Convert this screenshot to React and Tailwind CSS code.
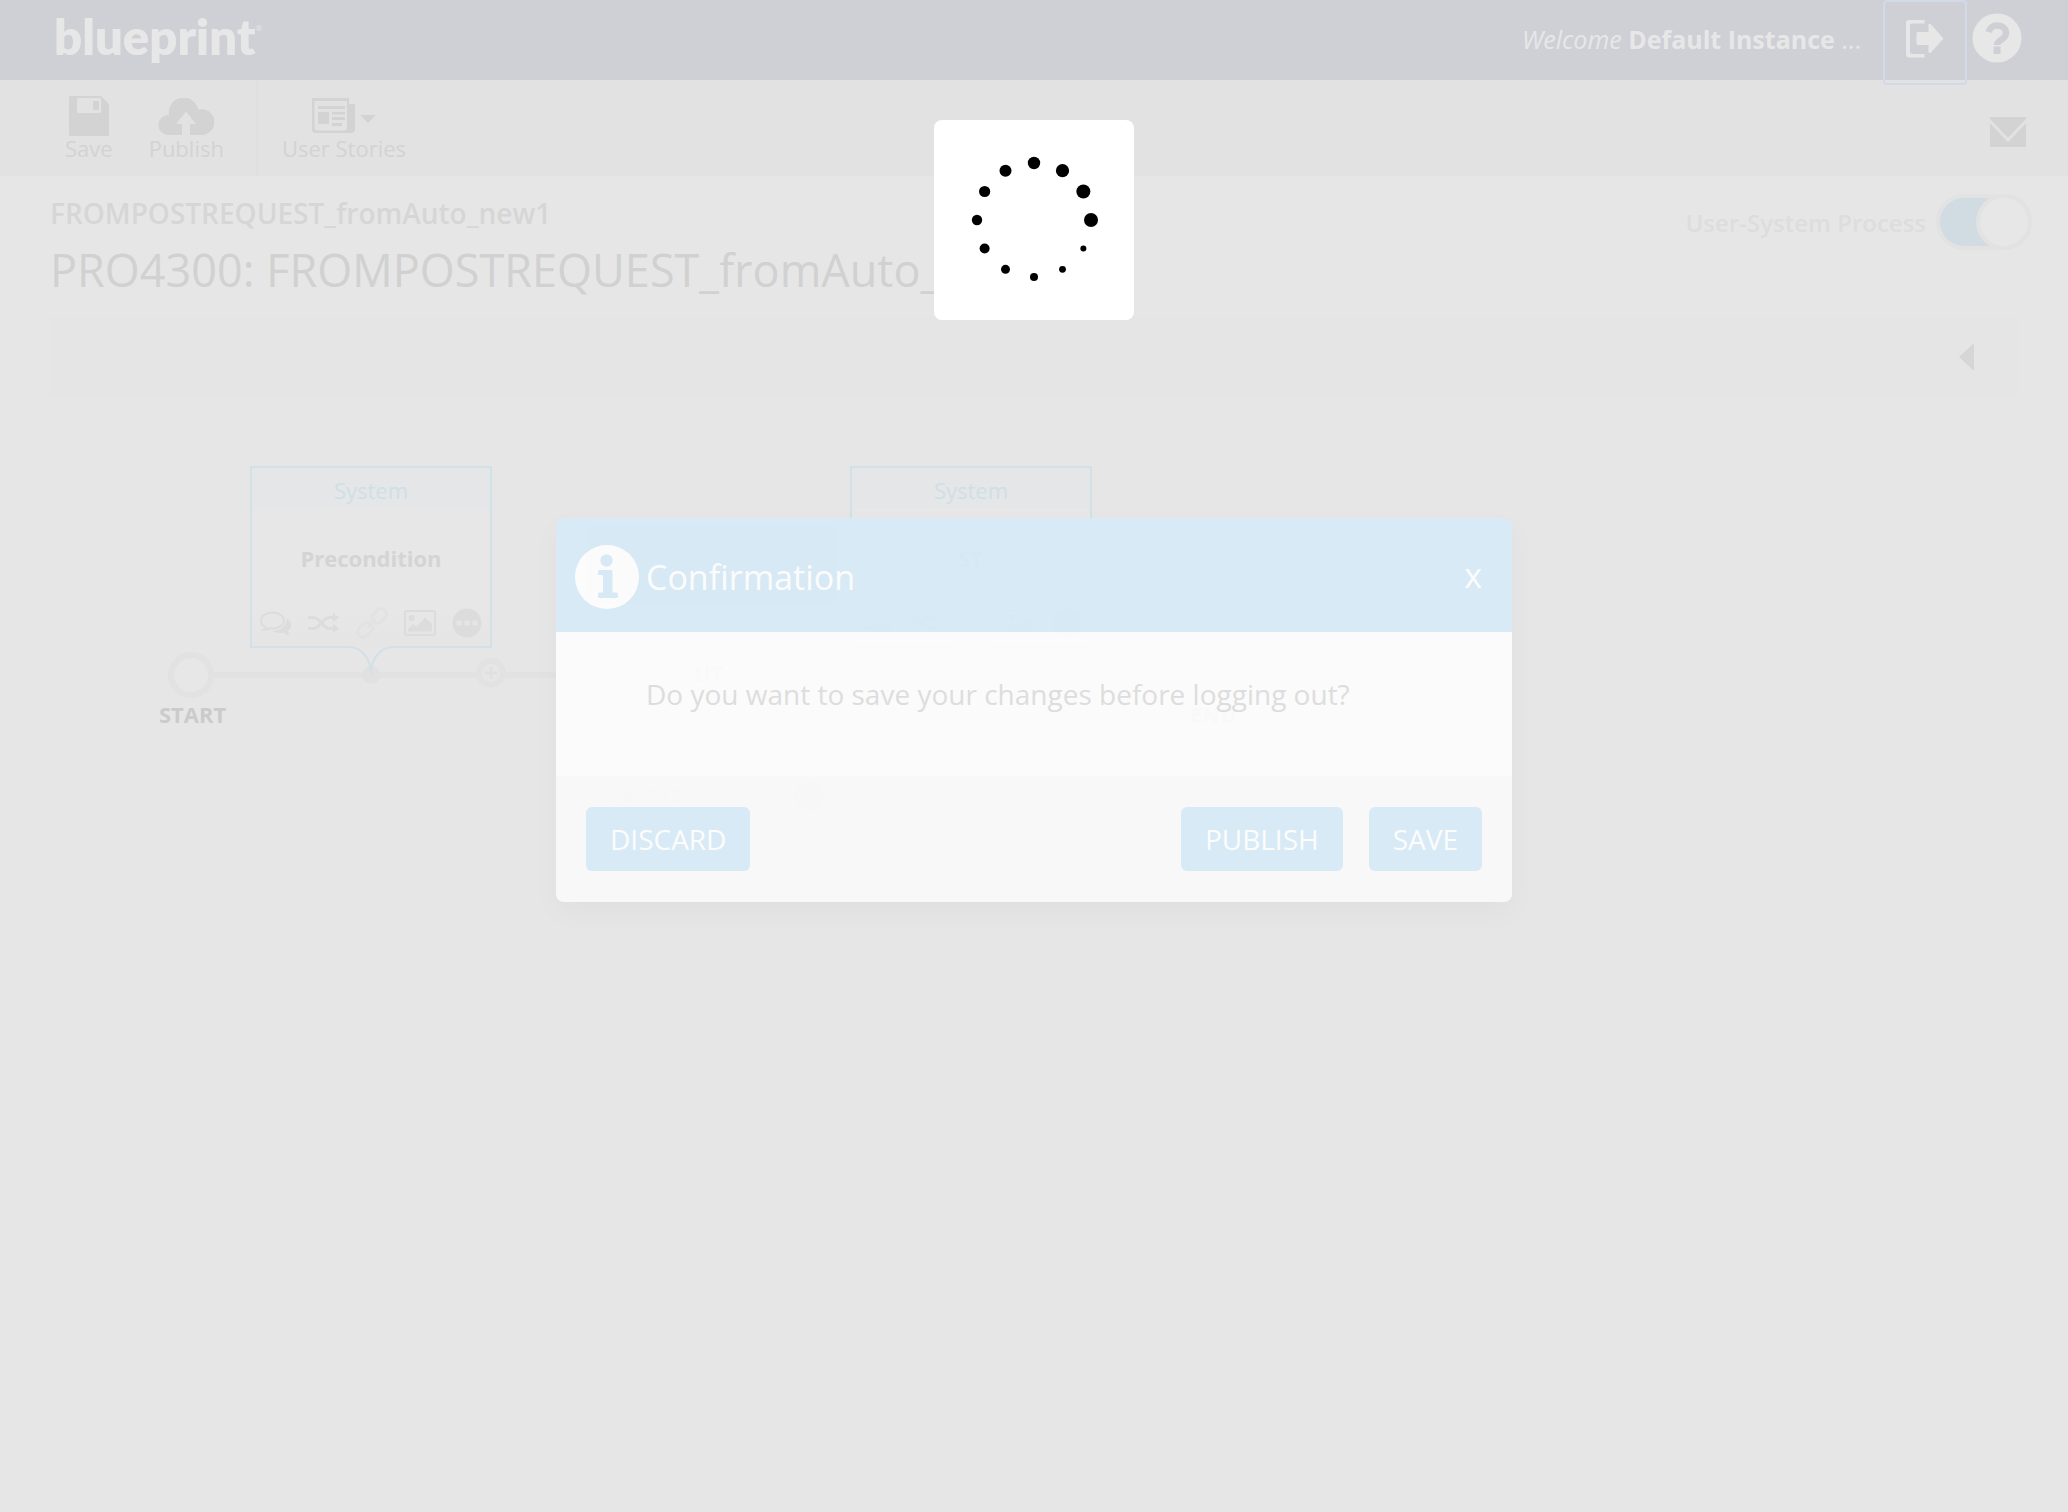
import React from "react";

const SaveIcon = () => (
  <svg width="40" height="40" viewBox="0 0 40 40" fill="#d3d3d3" fillRule="evenodd">
    <path d="M1 0H32L40 8V39Q40 40 39 40H1Q0 40 0 39V1Q0 0 1 0ZM8 2.500V16Q8 17 9 17H31Q32 17 32 16V2.500Q32 2 31 2H9Q8 2 8 2.500ZM24 5H30V14H24Z" />
  </svg>
);

const CloudIcon = () => (
  <svg width="56" height="38" viewBox="0 0 56 38">
    <path d="M10 37A10 10 0 0 1 11 17A14.500 14.500 0 0 1 40 11.500A13 13 0 1 1 43 37Z" fill="#d3d3d3" />
    <path d="M28 13.500L38 26H32V38H24V26H18Z" fill="#e2e2e2" />
  </svg>
);

const StoriesIcon = () => (
  <svg width="64" height="38" viewBox="0 0 64 38">
    <path fill="#d3d3d3" fillRule="evenodd" d="M0 0H37V6H43V31Q43 35 39 35H4Q0 35 0 31ZM2.500 3V30Q2.500 32.500 5 32.500H32Q35 32.500 35 30V3Z" />
    <path fill="#d3d3d3" d="M6 8H33V11H6ZM6 14H17V26H6ZM20 14H33V16.500H20ZM20 19H33V22H20ZM20 25H30V28H20ZM48 17H64L56 25Z" />
  </svg>
);

const LogoutIcon = () => (
  <svg width="38" height="38" viewBox="0 0 38 38" fill="#e7e7e7">
    <path d="M18.500 0V3.500H6Q4 3.500 4 5.500V32Q4 34 6 34H18.500V37.500H3Q0 37.500 0 34.500V3Q0 0 3 0Z" />
    <path d="M12 12H22.500V4.500Q24 3 25.500 5L37.500 18.500L25.500 32Q24 34 22.500 32.500V25H12Q10.500 25 10.500 23.500V13.500Q10.500 12 12 12Z" />
  </svg>
);

const HelpIcon = () => (
  <svg width="50" height="50" viewBox="0 0 50 50">
    <circle cx="25" cy="25" r="24.500" fill="#e7e7e7" />
    <path d="M16.500 19C18 14.500 21 12.500 25 12.500C30.500 12.500 34 15.500 34 20C34 23.500 32 25 29 27C26.500 28.700 25 29.500 25 32" fill="none" stroke="#cfd0d6" strokeWidth="6.500" />
    <path d="M21.500 33.500H28.500V41H21.500Z" fill="#cfd0d6" />
  </svg>
);

const InfoIcon = () => (
  <svg width="64" height="64" viewBox="0 0 64 64">
    <circle cx="32" cy="32" r="32" fill="#ffffff" />
    <circle cx="31.500" cy="15.500" r="6.200" fill="#d7ebf7" />
    <path d="M24 25H36Q37.500 25 37.500 26.500V47.500H41Q43 47.500 43 49V51.500Q43 53 41 53H24.500Q23 53 23 51.500V49Q23 47.500 24.500 47.500H28V30H24.500Q23 30 23 28.500V26.500Q23 25 24 25Z" fill="#d7ebf7" />
  </svg>
);

const ToolButton = ({ icon, label, className }) => (
  <button type="button" className={"flex h-full flex-col items-center pt-4 " + className}>
    <span className="flex h-10 items-end">{icon}</span>
    <span className="text-[22px] leading-6 text-[#d3d3d3]">{label}</span>
  </button>
);

const CommentIcon = () => (
  <svg width="32" height="25" viewBox="0 0 32 25">
    <path d="M12 1.500C6 1.500 1 5 1 9.500C1 12.500 3 15 5.500 16.200Q5 18 3.500 19Q7 19 9 17.300C18 18.500 24 14.500 24 9.500C24 5 19 1.500 12 1.500Z" fill="none" stroke="#dcdcdc" strokeWidth="2" />
    <path d="M27 7.500Q32 11 31 15.500Q30 18.500 28 19.500Q28 22 30 24Q26 24 24 21.500Q16 23 12 20Q26 19 27 7.500Z" fill="#dcdcdc" />
  </svg>
);

const ShuffleIcon = () => (
  <svg width="32" height="20" viewBox="0 0 32 20">
    <path d="M0 4.500H5C13 4.500 14 15.500 22 15.500H26M0 15.500H5C13 15.500 14 4.500 22 4.500H26" fill="none" stroke="#dcdcdc" strokeWidth="3" />
    <path d="M25 0L31 4.500L25 9ZM25 11L31 15.500L25 20Z" fill="#dcdcdc" />
  </svg>
);

const LinkIcon = () => (
  <svg width="32" height="32" viewBox="0 0 32 32" fill="none" stroke="#e2e2e2" strokeWidth="3">
    <rect x="-5.500" y="-8" width="11" height="16" rx="5" transform="translate(23 9) rotate(45)" />
    <rect x="-5.500" y="-8" width="11" height="16" rx="5" transform="translate(9 23) rotate(45)" />
    <path d="M12 20L20 12" />
  </svg>
);

const PictureIcon = () => (
  <svg width="32" height="26" viewBox="0 0 32 26">
    <rect x="1" y="1" width="30" height="24" rx="1.500" fill="none" stroke="#dcdcdc" strokeWidth="2" />
    <circle cx="7.500" cy="8" r="3" fill="#dcdcdc" />
    <path d="M4 21.500V19L9 14L12.500 17L21 7.500L28 14V21.500Z" fill="#dcdcdc" />
  </svg>
);

const DotsIcon = () => (
  <svg width="30" height="30" viewBox="0 0 30 30">
    <circle cx="15" cy="15" r="14.500" fill="#dcdcdc" />
    <path d="M4.500 12.500h5v5h-5zM12.500 12.500h5v5h-5zM20.500 12.500h5v5h-5z" fill="#e6e6e6" />
  </svg>
);

const SystemNode = ({ title, place }) => (
  <div className={"absolute top-[64px] w-[242px] " + place}>
    <div className="h-[182px] border-2 border-[#d2e0e7] bg-[#e7e7e7]">
      <div className="flex h-10 items-center justify-center bg-[#e5e6e8] pt-1 text-[22px] leading-[30px] text-[#cfdfe6]">
        System
      </div>
      <div className="flex h-[100px] items-center justify-center text-[22px] font-bold text-[#d4d4d4]">
        {title}
      </div>
      <div className="flex h-[38px] items-center justify-between bg-linear-to-b from-[#e7e7e7] to-[#e5e5e5] px-2 pb-2">
        <CommentIcon />
        <ShuffleIcon />
        <LinkIcon />
        <PictureIcon />
        <DotsIcon />
      </div>
    </div>
    <svg className="relative -mt-[2px] ml-[99px]" width="44" height="30" viewBox="0 0 44 30">
      <path d="M0 0H44V1Q24 3 22 28Q20 3 0 1Z" fill="#e6e6e6" />
      <path d="M0 1C12 1 22 12 22 28C22 12 32 1 44 1" fill="none" stroke="#d2e0e7" strokeWidth="2" />
    </svg>
  </div>
);

const Diagram = () => (
  <section className="relative mt-[5px] h-[480px]">
    <svg className="absolute top-[240px] left-[160px]" width="1090" height="64" viewBox="0 0 1090 64">
      <path d="M50 33H1040" stroke="#e2e2e2" strokeWidth="6" />
      <circle cx="31" cy="33" r="20" fill="#e7e7e7" stroke="#e2e2e2" strokeWidth="6" />
      <circle cx="211" cy="33" r="9" fill="#e1e1e1" />
      <circle cx="331" cy="31" r="12" fill="#e6e6e6" stroke="#e2e2e2" strokeWidth="6" />
      <path d="M325 31H337M331 25V37" stroke="#e0e0e0" strokeWidth="3" />
      <circle cx="1053" cy="33" r="20" fill="#e7e7e7" stroke="#e2e2e2" strokeWidth="6" />
    </svg>
    <div className="absolute top-[124px] left-[586px] h-[78px] w-[250px] bg-[#e0e0e0]" />
    <SystemNode title="Precondition" place="left-[250px]" />
    <SystemNode title="ST" place="left-[850px]" />
    <div className="absolute top-[297px] left-[159px] text-[22px] leading-[30px] font-bold text-[#cbcbcb]">START</div>
    <div className="absolute top-[256px] left-[694px] text-[22px] leading-[30px] font-bold text-[#d3d3d3]">UT</div>
    <div className="absolute top-[297px] left-[1190px] text-[22px] leading-[30px] font-bold text-[#cbcbcb]">END</div>
    <div className="absolute top-[378px] left-[602px] flex w-[222px] items-center justify-between">
      <CommentIcon />
      <ShuffleIcon />
      <LinkIcon />
      <span className="w-8" />
      <DotsIcon />
    </div>
  </section>
);

const DialogButton = ({ children }) => (
  <button type="button" className="h-16 rounded-md bg-[#d7ebf7] px-6 text-[28px] leading-[38px] text-white">
    {children}
  </button>
);

const Dialog = () => (
  <div className="absolute inset-x-0 top-[518px] flex justify-center">
    <div
      role="dialog"
      aria-labelledby="dialog-title"
      className="w-[956px] overflow-hidden rounded-lg opacity-90 shadow-[0_10px_30px_rgba(0,0,0,0.03)]"
    >
      <header className="flex h-[114px] items-center bg-[#d7ebf7] pt-1 pr-[30px] pl-[19px] text-white">
        <InfoIcon />
        <h2 id="dialog-title" className="ml-[7px] flex-1 text-[34px] leading-[46px]">Confirmation</h2>
        <button type="button" aria-label="Close" className="pb-1 text-[34px] leading-[46px] font-medium">x</button>
      </header>
      <div className="h-36 bg-[#fefefe] px-[90px] pt-[43px] text-[28px] leading-[38px] text-[#dddddd]">
        Do you want to save your changes before logging out?
      </div>
      <footer className="flex h-[126px] items-center gap-[26px] bg-[#fbfbfb] px-[30px]">
        <DialogButton>DISCARD</DialogButton>
        <div className="flex-1" />
        <DialogButton>PUBLISH</DialogButton>
        <DialogButton>SAVE</DialogButton>
      </footer>
    </div>
  </div>
);

const spinnerDots = [7, 3, 3.4, 4, 4.5, 5, 5.2, 5.6, 6, 6.2, 6.6, 7];

const Spinner = () => (
  <div className="absolute inset-x-0 top-[120px] flex justify-center">
    <div className="rounded-lg bg-white" role="status" aria-label="Loading">
      <svg width="200" height="200" viewBox="-100 -100 200 200">
        {spinnerDots.map((r, i) => (
          <circle
            key={i}
            cx={57 * Math.cos((i * Math.PI) / 6)}
            cy={57 * Math.sin((i * Math.PI) / 6)}
            r={r}
          />
        ))}
      </svg>
    </div>
  </div>
);

export default function App() {
  return (
    <div className="relative min-h-screen overflow-hidden bg-[#e6e6e6] font-['Open_Sans',sans-serif]">
      <header className="flex h-20 items-center bg-[#cfd0d6] pr-[46px] pl-[54px] text-[#e7e7e7]">
        <a href="#home" className="flex items-start pb-2">
          <span className="font-['Lato',sans-serif] text-[49px] leading-[60px] font-extrabold">blueprint</span>
          <span className="pt-4 text-[8px]">®</span>
        </a>
        <p className="ml-auto pb-0.5 text-[25px] leading-8">
          <span className="italic">Welcome</span> <b>Default Instance</b> ...
        </p>
        <button
          type="button"
          aria-label="Log out"
          className="mt-1 ml-[22px] flex h-[85px] w-[84px] items-center justify-center rounded-sm border-2 border-[#d2d9e8] pb-1.5"
        >
          <LogoutIcon />
        </button>
        <button type="button" aria-label="Help" className="ml-[5px] pb-1">
          <HelpIcon />
        </button>
      </header>

      <nav className="flex h-24 items-center bg-[#e2e2e2] pr-[42px] pl-[65px]">
        <ToolButton icon={<SaveIcon />} label="Save" className="mr-9" />
        <ToolButton icon={<CloudIcon />} label="Publish" className="mr-8" />
        <div className="h-full w-0.5 bg-[#dfdfdf]" />
        <ToolButton icon={<StoriesIcon />} label="User Stories" className="ml-6" />
        <button type="button" aria-label="Messages" className="ml-auto pt-2">
          <svg width="36" height="30" viewBox="0 0 36 30">
            <path d="M0 0H36V30H0Z" fill="#d3d3d3" />
            <path d="M-1 3L18 23L37 3" fill="none" stroke="#e2e2e2" strokeWidth="3" />
          </svg>
        </button>
      </nav>

      <div className="flex items-start justify-between pr-9 pl-[50px]">
        <div>
          <h2 className="pt-[18px] text-[28px] leading-[38px] font-semibold text-[#d6d6d6]">FROMPOSTREQUEST_fromAuto_new1</h2>
          <h1 className="pt-1.5 text-[45px] leading-[64px] text-[#d1d1d1]">PRO4300: FROMPOSTREQUEST_fromAuto_new1</h1>
        </div>
        <label className="flex items-center gap-2.5 pt-[18px] text-[24px] leading-8 font-semibold text-[#dddddd]">
          <span className="pt-0.5">User-System Process</span>
          <input type="checkbox" role="switch" defaultChecked className="peer sr-only" />
          <span className="flex h-14 w-24 justify-end rounded-full border-4 border-[#e2e2e2] bg-[#d1dce2]">
            <span className="-mt-1 -mr-1 size-14 rounded-full border-4 border-[#e2e2e2] bg-[#e7e7e7]" />
          </span>
        </label>
      </div>

      <div className="mt-[15px] mr-[50px] ml-[50px] flex h-20 items-center justify-end bg-[#e5e5e5] pr-11">
        <button type="button" aria-label="Expand panel">
          <svg width="15" height="28" viewBox="0 0 15 28">
            <path d="M15 0V28L0 14Z" fill="#d6d6d6" />
          </svg>
        </button>
      </div>

      <Diagram />
      <Dialog />
      <Spinner />
    </div>
  );
}
